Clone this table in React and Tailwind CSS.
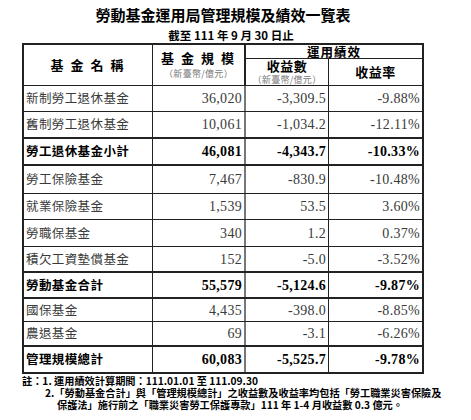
import React from "react";

const rows = [
  { name: "新制勞工退休基金", a: "36,020", b: "-3,309.5", c: "-9.88%", h: "h-[26px]", line: "border-b" },
  { name: "舊制勞工退休基金", a: "10,061", b: "-1,034.2", c: "-12.11%", h: "h-[27px]", line: "border-b-2" },
  { name: "勞工退休基金小計", bold: true, a: "46,081", b: "-4,343.7", c: "-10.33%", h: "h-[27px]", line: "border-b-2" },
  { name: "勞工保險基金", a: "7,467", b: "-830.9", c: "-10.48%", h: "h-[28px]", line: "border-b" },
  { name: "就業保險基金", a: "1,539", b: "53.5", c: "3.60%", h: "h-[26px]", line: "border-b" },
  { name: "勞職保基金", a: "340", b: "1.2", c: "0.37%", h: "h-[27px]", line: "border-b" },
  { name: "積欠工資墊償基金", a: "152", b: "-5.0", c: "-3.52%", h: "h-[26px]", line: "border-b-2" },
  { name: "勞動基金合計", bold: true, a: "55,579", b: "-5,124.6", c: "-9.87%", h: "h-[26px]", line: "border-b-2" },
  { name: "國保基金", a: "4,435", b: "-398.0", c: "-8.85%", h: "h-[23px]", line: "border-b" },
  { name: "農退基金", a: "69", b: "-3.1", c: "-6.26%", h: "h-[25px]", line: "border-b-2" },
  { name: "管理規模總計", bold: true, a: "60,083", b: "-5,525.7", c: "-9.78%", h: "h-[25px]", line: "" },
];

function Row({ r }) {
  const txt = r.bold ? "text-black font-bold" : "text-[#3a3a3a]";
  const num =
    "flex items-center justify-end pr-[2px] font-['Liberation_Serif',serif] text-[14px] tracking-[0.3px] " + txt;
  return (
    <div className={"flex border-[#222] " + r.h + " " + r.line}>
      <div
        className={
          "w-[129px] border-r border-[#222] flex items-center pl-[2px] text-[12.5px] tracking-[0.4px] font-['Noto_Sans_CJK_TC',sans-serif] " +
          txt
        }
      >
        {r.name}
      </div>
      <div className={"w-[93px] border-r-2 border-[#777] " + num}>{r.a}</div>
      <div className={"w-[83px] border-r border-[#222] " + num}>{r.b}</div>
      <div className={"flex-1 " + num}>{r.c}</div>
    </div>
  );
}

export default function App() {
  const sub =
    "text-[9px] leading-[10px] text-[#777] tracking-[0.3px] font-normal font-['Noto_Sans_CJK_TC',sans-serif]";
  return (
    <div className="w-[471px] h-[420px] bg-white overflow-hidden font-['Noto_Sans_CJK_TC',sans-serif] text-black">
      <div className="w-[402px] ml-[22px]">
        <div className="pt-[6px] text-center text-[15px] leading-[18px] font-bold">
          勞動基金運用局管理規模及績效一覽表
        </div>
        <div className="mt-[4px] pl-[16px] text-center text-[11.5px] leading-[14px] font-bold">
          截至 111 年 9 月 30 日止
        </div>
        <div className="mt-[1px] border-2 border-[#222]">
          <div className="grid grid-cols-[129px_93px_83px_93px] grid-rows-[14px_27px] font-bold text-[13px]">
            <div className="row-span-2 border-r border-b border-[#222] flex items-center justify-center tracking-[2px]">
              基 金 名 稱
            </div>
            <div className="row-span-2 border-r-2 border-b border-[#222] flex flex-col items-center justify-center">
              <div className="leading-[15px] tracking-[2px] mt-[-2px]">基 金 規 模</div>
              <div className={sub + " mt-[4px]"}>（新臺幣/億元）</div>
            </div>
            <div className="col-span-2 border-b border-[#222] flex items-center justify-center text-[12.5px] leading-[13px] tracking-[1px]">
              運用績效
            </div>
            <div className="border-r border-b border-[#222] flex flex-col items-center justify-center">
              <div className="leading-[13px] tracking-[0.5px]">收益數</div>
              <div className={sub + " mt-[3px]"}>（新臺幣/億元）</div>
            </div>
            <div className="border-b border-[#222] flex items-center justify-center tracking-[0.5px]">
              收益率
            </div>
          </div>
          {rows.map((r, i) => (
            <Row key={i} r={r} />
          ))}
        </div>
        <div className="mt-[1px] text-[10.2px] leading-[12px] font-bold whitespace-nowrap">
          <div>註：1. 運用績效計算期間：111.01.01 至 111.09.30</div>
          <div className="pl-[35px] -indent-[12px]">
            2.「勞動基金合計」與「管理規模總計」之收益數及收益率均包括「勞工職業災害保險及
            <br />
            保護法」施行前之「職業災害勞工保護專款」111 年 1-4 月收益數 0.3 億元。
          </div>
        </div>
      </div>
    </div>
  );
}
